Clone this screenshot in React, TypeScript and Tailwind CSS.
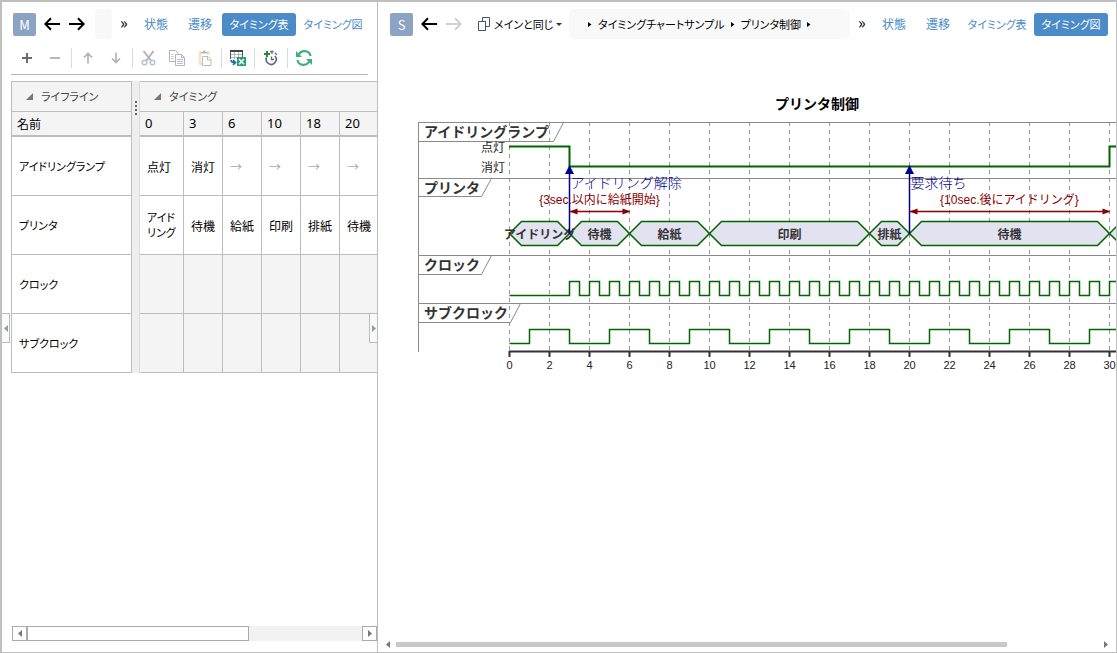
import React from 'react';
import clsx from 'clsx';

const TABS = ['状態', '遷移', 'タイミング表', 'タイミング図'];

const TIMES = [0, 3, 6, 10, 18, 20];

const LIFELINES = [
    { name: 'アイドリングランプ', cells: ['点灯', '消灯', '→', '→', '→', '→'] },
    { name: 'プリンタ', cells: ['アイドリング', '待機', '給紙', '印刷', '排紙', '待機'] },
    { name: 'クロック', cells: ['', '', '', '', '', ''] },
    { name: 'サブクロック', cells: ['', '', '', '', '', ''] },
];

/* ---------- Icons ---------- */

const ArrowIcon: React.FC<{ flip?: boolean }> = ({ flip }) => (
    <svg width="16" height="14" viewBox="0 0 16 14" className={flip ? 'rotate-180' : ''} fill="none" stroke="currentColor" strokeWidth="2">
        <path d="M16 7H1.5M7 1.2L1.3 7L7 12.8" />
    </svg>
);

const TriangleIcon: React.FC<{ dir: 'left' | 'right' }> = ({ dir }) => (
    <svg width="4" height="7" viewBox="0 0 4 7" className="shrink-0" fill="currentColor">
        <path d={dir === 'left' ? 'M4 0V7L0 3.5Z' : 'M0 0V7L4 3.5Z'} />
    </svg>
);

const CrumbIcon = () => (
    <svg width="4" height="5" viewBox="0 0 4 5" className="shrink-0" fill="currentColor">
        <path d="M0 0L3.5 2.5L0 5Z" />
    </svg>
);

const PlusIcon = () => (
    <svg width="12" height="12" viewBox="0 0 12 12" stroke="#6b6b6b" strokeWidth="2">
        <path d="M6 1V11M1 6H11" />
    </svg>
);

const MinusIcon = () => (
    <svg width="12" height="12" viewBox="0 0 12 12" stroke="#b8b8b8" strokeWidth="2">
        <path d="M1 6H11" />
    </svg>
);

const UpIcon = () => (
    <svg width="10" height="12" viewBox="0 0 10 12" fill="none" stroke="#b0b0b0" strokeWidth="1.6">
        <path d="M5 11.5V1.5M1 5.5L5 1.5L9 5.5" />
    </svg>
);

const DownIcon = () => (
    <svg width="10" height="12" viewBox="0 0 10 12" fill="none" stroke="#b0b0b0" strokeWidth="1.6">
        <path d="M5 .5V10.5M1 6.5L5 10.5L9 6.5" />
    </svg>
);

const CutIcon = () => (
    <svg width="16" height="16" viewBox="0 0 16 16" fill="none">
        <path d="M2.5 1L10 10.5M12.5 1L5.5 10.5" stroke="#b4b4b4" strokeWidth="2" />
        <circle cx="3.5" cy="12.5" r="2.3" stroke="#b3c3de" strokeWidth="1.5" />
        <circle cx="11.5" cy="12.5" r="2.3" stroke="#b3c3de" strokeWidth="1.5" />
    </svg>
);

const CopyIcon = () => (
    <svg width="16" height="16" viewBox="0 0 16 16" fill="#fff" stroke="#b4b4b4">
        <path d="M.5 .5H6.5L9.5 3.5V11.5H.5Z" />
        <path d="M2 4.5H5M2 6.5H5M2 8.5H5" stroke="#c3d0e6" />
        <path d="M6.5 4.5H12.5L15.5 7.5V15.5H6.5ZM12.5 4.5V7.5H15.5" />
        <path d="M8 9.5H14M8 11.5H14M8 13.5H14" stroke="#b3c3de" />
    </svg>
);

const PasteIcon = () => (
    <svg width="14" height="16" viewBox="0 0 14 16" fill="none">
        <path d="M2 14.5V2.5H3.5M9 2.5H10.5V5M1 13.5H4" stroke="#f5e0bf" strokeWidth="2.4" />
        <path d="M3 3.5V2H5V.5H7.5V2H9.5V3.5Z" fill="#b8b8b8" />
        <path d="M4.5 6.5H10L13 9.5V15.5H4.5ZM9.5 6.5V10H13" fill="#fff" stroke="#bcbcbc" />
    </svg>
);

const ExportIcon = () => (
    <svg width="16" height="16" viewBox="0 0 16 16" fill="none">
        <path d="M1 4.5H12M1 7.5H7M4.5 2V9M8.5 2V7" stroke="#b5b5b5" />
        <path d="M.5 9V1.5M12.5 1.5V7" stroke="#555" />
        <path d="M0 1H13" stroke="#444" strokeWidth="2" />
        <path d="M1 10Q1 12.5 5 12.5M3 10L5.5 12.5L3 15" stroke="#1f66b8" strokeWidth="1.7" />
        <rect x="7" y="7" width="9" height="9" fill="#21a366" />
        <path d="M9 9L14 14.2M14 9L9 14.2" stroke="#fff" strokeWidth="1.6" />
    </svg>
);

const AddTimeIcon = () => (
    <svg width="14" height="16" viewBox="0 0 14 16" fill="none">
        <path d="M10.9 6A5 5 0 1 1 2.6 7.4" stroke="#5c6b80" strokeWidth="1.7" />
        <path d="M6 1.5H9.5M8 1.5V4M11 3L12.8 4.8M7.5 6.5V9.5H10" stroke="#5c6b80" strokeWidth="1.3" />
        <path d="M3 1V7M0 4H6" stroke="#2b8a2b" strokeWidth="2" />
    </svg>
);

const RefreshIcon = () => (
    <svg width="16" height="16" viewBox="0 0 16 16" fill="none" stroke="#3fae82" strokeWidth="2.2">
        <path d="M2.5 5.5A6.3 6.3 0 0 1 14.6 6M13.5 10.5A6.3 6.3 0 0 1 1.4 10" />
        <path d="M0 1V7H6Z" fill="#3fae82" stroke="none" />
        <path d="M16 15V9H10Z" fill="#3fae82" stroke="none" />
    </svg>
);

const WindowsIcon = () => (
    <svg width="13" height="14" viewBox="0 0 13 14" className="shrink-0" fill="none" stroke="#44546a">
        <path d="M4.5 4V.5H11.5V9.5H8" />
        <path d="M.5 4.5H7.5V13.5H.5Z" />
    </svg>
);

/* ---------- Shared header parts ---------- */

const Badge: React.FC<{ label: string }> = ({ label }) => (
    <button className="size-[23px] shrink-0 rounded-xs bg-[#8da3c4] text-[13px] leading-none text-white">{label}</button>
);

const TabBar: React.FC<{ active: string }> = ({ active }) => (
    <nav className="flex shrink-0">
        {TABS.map((tab) => (
            <button
                key={tab}
                className={clsx(
                    'h-[23px] rounded-[3px] text-center whitespace-nowrap',
                    tab.length > 2 ? 'w-[74px] text-[11px]' : 'w-11',
                    tab === active ? 'bg-[#4a8bc8] text-white' : 'text-[#4a8bc8]'
                )}
            >
                {tab}
            </button>
        ))}
    </nav>
);

/* ---------- Main pane: timing table ---------- */

const ToolButton: React.FC<{ label: string; children: React.ReactNode }> = ({ label, children }) => (
    <button aria-label={label} className="flex h-6 w-7 items-center justify-center">
        {children}
    </button>
);

const Separator = () => <span className="mx-[2px] h-5 w-px bg-[#d9d9d9]" />;

const GroupHeader: React.FC<{ title: string }> = ({ title }) => (
    <span className="flex items-center gap-2 pl-[14px] text-[11px] text-[#444]">
        <svg width="7" height="7" viewBox="0 0 7 7" fill="#777">
            <path d="M7 0V7H0Z" />
        </svg>
        {title}
    </span>
);

const TimingTable = () => (
    <div className="mt-[6px] ml-[9px] flex overflow-hidden">
        <table className="w-[121px] shrink-0 table-fixed border-separate border-spacing-0 border-t border-l border-[#bdbdbd] text-left">
            <thead className="bg-[#f4f4f4]">
                <tr>
                    <th className="h-[30px] border-r border-b border-[#bdbdbd] p-0 font-normal">
                        <GroupHeader title="ライフライン" />
                    </th>
                </tr>
                <tr>
                    <th className="h-[25px] border-r border-b-2 border-[#bdbdbd] p-0 pl-[5px] font-normal">名前</th>
                </tr>
            </thead>
            <tbody>
                {LIFELINES.map((line) => (
                    <tr key={line.name}>
                        <td className="h-[59px] border-r border-b border-[#bdbdbd] p-0 pl-[7px] text-[11px] whitespace-nowrap">{line.name}</td>
                    </tr>
                ))}
            </tbody>
        </table>

        {/* Column splitter */}
        <div className="flex w-2 shrink-0 flex-col items-center gap-[2px] border-r border-[#dcdcdc] bg-[#eee] pt-5">
            {[0, 1, 2, 3].map((i) => (
                <span key={i} className="size-[2px] bg-[#666]" />
            ))}
        </div>

        <table className="w-[239px] shrink-0 table-fixed border-separate border-spacing-0 border-t border-[#bdbdbd] text-left">
            <colgroup>
                <col className="w-11" />
                {TIMES.slice(1).map((t) => (
                    <col key={t} className="w-[39px]" />
                ))}
            </colgroup>
            <thead className="bg-[#f4f4f4]">
                <tr>
                    <th colSpan={6} className="h-[30px] border-b border-[#bdbdbd] p-0 font-normal">
                        <GroupHeader title="タイミング" />
                    </th>
                </tr>
                <tr>
                    {TIMES.map((t) => (
                        <th key={t} className="h-[25px] border-r border-b-2 border-[#bdbdbd] p-0 pl-[5px] font-['Noto_Sans'] text-[13px] font-normal">
                            {t}
                        </th>
                    ))}
                </tr>
            </thead>
            <tbody>
                {LIFELINES.map((line) => (
                    <tr key={line.name}>
                        {line.cells.map((cell, i) => (
                            <td
                                key={i}
                                className={clsx(
                                    'h-[59px] border-r border-b border-[#bdbdbd] p-0 pl-[7px] leading-[15px]',
                                    cell === '' && 'bg-[#f4f4f4]',
                                    cell === '→' && 'text-[#a8a8a8]',
                                    cell.length > 2 && 'text-[11px]'
                                )}
                            >
                                {cell}
                            </td>
                        ))}
                    </tr>
                ))}
            </tbody>
        </table>
    </div>
);

const MainPane = () => (
    <section className="relative flex w-[376px] shrink-0 flex-col overflow-hidden border-r border-[#bdbdbd]">
        <header className="flex h-11 items-center pl-[11px]">
            <Badge label="M" />
            <button aria-label="戻る" className="ml-2"><ArrowIcon /></button>
            <button aria-label="進む" className="ml-[9px]"><ArrowIcon flip /></button>
            <span className="ml-[10px] h-[30px] w-[17px] rounded-sm bg-[#f8f8f8]" />
            <span className="w-[22px] pb-1 pl-2 text-base leading-none">»</span>
            <TabBar active="タイミング表" />
        </header>

        <div className="mx-[9px] flex items-center border-b border-[#b5b5b5] pb-1 pl-[2px]">
            <ToolButton label="追加"><PlusIcon /></ToolButton>
            <ToolButton label="削除"><MinusIcon /></ToolButton>
            <Separator />
            <ToolButton label="上へ"><UpIcon /></ToolButton>
            <ToolButton label="下へ"><DownIcon /></ToolButton>
            <Separator />
            <ToolButton label="切り取り"><CutIcon /></ToolButton>
            <ToolButton label="コピー"><CopyIcon /></ToolButton>
            <ToolButton label="貼り付け"><PasteIcon /></ToolButton>
            <Separator />
            <ToolButton label="エクスポート"><ExportIcon /></ToolButton>
            <Separator />
            <ToolButton label="時刻を追加"><AddTimeIcon /></ToolButton>
            <Separator />
            <ToolButton label="更新"><RefreshIcon /></ToolButton>
        </div>

        <TimingTable />

        {/* Horizontal scrollbar */}
        <div className="mt-auto mb-[11px] ml-[10px] flex h-[15px] bg-[#f2f2f2] text-[#777]">
            <button aria-label="左へ" className="flex w-[15px] items-center justify-center border border-[#ababab] bg-white">
                <TriangleIcon dir="left" />
            </button>
            <div className="w-[222px] border border-[#ababab] bg-white" />
            <button aria-label="右へ" className="ml-auto flex w-[15px] items-center justify-center border border-[#ababab] bg-white">
                <TriangleIcon dir="right" />
            </button>
        </div>

        {/* Side panel handles */}
        <button aria-label="左パネル" className="absolute top-[311px] left-0 flex h-[30px] w-2 items-center justify-center border border-l-0 border-[#bdbdbd] bg-[#f8f9fb] text-[#999]">
            <TriangleIcon dir="left" />
        </button>
        <button aria-label="右パネル" className="absolute top-[311px] right-0 flex h-[30px] w-2 items-center justify-center border border-r-0 border-[#bdbdbd] bg-[#f8f9fb] text-[#999]">
            <TriangleIcon dir="right" />
        </button>
    </section>
);

/* ---------- Sub pane: timing chart ---------- */

const tx = (t: number) => 509.5 + t * 20;

const LANES = [
    { name: 'アイドリングランプ', top: 122.5, bottom: 141.5, width: 135 },
    { name: 'プリンタ', top: 178.5, bottom: 196.5, width: 63 },
    { name: 'クロック', top: 255.5, bottom: 274.5, width: 63 },
    { name: 'サブクロック', top: 303.5, bottom: 322.5, width: 92 },
];

const STATES = [
    { from: 0, to: 3, label: 'アイドリング' },
    { from: 3, to: 6, label: '待機' },
    { from: 6, to: 10, label: '給紙' },
    { from: 10, to: 18, label: '印刷' },
    { from: 18, to: 20, label: '排紙' },
    { from: 20, to: 30, label: '待機' },
    { from: 30, to: 40, label: '' },
];

const MESSAGES = [
    { at: 3, label: 'アイドリング解除' },
    { at: 20, label: '要求待ち' },
];

const CONSTRAINTS = [
    { from: 3, to: 6, label: '{3sec.以内に給紙開始}' },
    { from: 20, to: 30, label: '{10sec.後にアイドリング}' },
];

const TICKS = Array.from({ length: 16 }, (_, i) => i * 2);

// Square wave starting low at t=0, first rising edge at `start`
const wave = (start: number, half: number, low: number, high: number) => {
    let d = `M${tx(0)} ${low}`;
    let up = false;
    for (let t = start; t <= 32; t += half) {
        d += `H${tx(t)}V${up ? low : high}`;
        up = !up;
    }
    return d;
};

const TimingChart = () => (
    <svg
        width="738"
        height="340"
        viewBox="378 46 738 340"
        className="block shrink-0 font-['Liberation_Sans','Noto_Sans_CJK_JP',sans-serif] [font-feature-settings:normal]"
        fill="none"
    >
        <text x="817" y="109" textAnchor="middle" className="fill-black text-[14px] font-bold">プリンタ制御</text>

        {TICKS.map((t) => (
            <path key={t} d={`M${tx(t)} 122V351`} stroke="#999" strokeDasharray="4 4" />
        ))}

        {LANES.map((lane) => (
            <g key={lane.name}>
                <path
                    d={`M418 ${lane.top}H1117M418 ${lane.bottom}H${418.5 + lane.width}l10 ${lane.top - lane.bottom}`}
                    stroke="#8a8a8a"
                />
                <text x="424" y={lane.top + 14} className="fill-[#333] text-[14px] font-bold">{lane.name}</text>
            </g>
        ))}
        <path d="M418.5 122V352" stroke="#8a8a8a" />

        <g className="fill-[#222] text-[12px]">
            <text x="505" y="152" textAnchor="end">点灯</text>
            <text x="505" y="172" textAnchor="end">消灯</text>
        </g>
        <path d="M509 146.5H569.5V166.5H1109.5V146.5H1117" stroke="#006400" strokeWidth="2" />

        {STATES.map((s) => (
            <path
                key={s.from}
                d={`M${tx(s.from)} 233.5L${tx(s.from) + 12} 221.5H${tx(s.to) - 12}L${tx(s.to)} 233.5L${tx(s.to) - 12} 245.5H${tx(s.from) + 12}Z`}
                fill="#e2e2f0"
                stroke="#006400"
                strokeWidth="1.5"
            />
        ))}
        {STATES.map((s) => (
            <text key={s.from} x={(tx(s.from) + tx(s.to)) / 2} y="239" textAnchor="middle" className="fill-[#333] text-[12px] font-bold">
                {s.label}
            </text>
        ))}

        <path d={wave(3, 0.5, 295.5, 281.5)} stroke="#006400" strokeWidth="1.5" />
        <path d={wave(1, 2, 343.5, 329.5)} stroke="#006400" strokeWidth="1.5" />

        {MESSAGES.map((m) => (
            <g key={m.at}>
                <path d={`M${tx(m.at)} 234V170`} stroke="#00008b" strokeWidth="1.5" />
                <path d={`M${tx(m.at)} 165l4.5 9h-9Z`} fill="#00008b" />
                <text x={tx(m.at) + 1} y="188" className="fill-[#00008b] text-[14px] font-light">{m.label}</text>
            </g>
        ))}

        {CONSTRAINTS.map((c) => (
            <g key={c.from}>
                <path d={`M${tx(c.from)} 211.5H${tx(c.to)}`} stroke="#8b0000" strokeWidth="1.5" />
                <path d={`M${tx(c.from)} 211.5l8-3v6ZM${tx(c.to) + 1} 211.5l-8-3v6Z`} fill="#8b0000" />
                <text x={(tx(c.from) + tx(c.to)) / 2} y="204" textAnchor="middle" className="fill-[#8b0000] text-[12px]">
                    {c.label}
                </text>
            </g>
        ))}

        <path d="M509 351.5H1117" stroke="#333" strokeWidth="2" />
        {TICKS.map((t) => (
            <g key={t}>
                <path d={`M${tx(t)} 351V357`} stroke="#333" strokeWidth="2" />
                <text x={tx(t)} y="369" textAnchor="middle" className="fill-[#222] text-[11px]">{t}</text>
            </g>
        ))}
    </svg>
);

const SubPane = () => (
    <section className="flex min-w-0 flex-1 flex-col overflow-hidden">
        <header className="flex h-11 shrink-0 items-center pr-2 pl-3">
            <Badge label="S" />
            <button aria-label="戻る" className="ml-2"><ArrowIcon /></button>
            <button aria-label="進む" className="ml-[9px] text-[#d0d0d0]"><ArrowIcon flip /></button>
            <button className="ml-4 flex w-[83px] shrink-0 items-center gap-[3px] text-[11px] whitespace-nowrap">
                <WindowsIcon />
                メインと同じ
                <svg width="6" height="3" viewBox="0 0 6 3" className="shrink-0" fill="#333">
                    <path d="M0 0H6L3 3Z" />
                </svg>
            </button>
            <div className="ml-2 flex h-[30px] min-w-0 flex-1 items-center gap-[6px] rounded-md bg-[#f9f9f9] pl-[19px] text-[11px] whitespace-nowrap">
                <CrumbIcon />
                <span>タイミングチャートサンプル</span>
                <CrumbIcon />
                <span>プリンタ制御</span>
                <CrumbIcon />
            </div>
            <span className="w-[22px] pb-1 pl-2 text-base leading-none">»</span>
            <TabBar active="タイミング図" />
        </header>

        <TimingChart />

        <div className="mt-auto mb-1 flex h-[7px] items-center gap-[6px] px-2 text-[#777]">
            <TriangleIcon dir="left" />
            <div className="min-w-0 flex-1">
                <div className="h-[5px] w-[87%] bg-[#c9c9c9]" />
            </div>
            <TriangleIcon dir="right" />
        </div>
    </section>
);

export default function App() {
    return (
        <main className="flex h-screen border-t-2 border-r border-b border-l-2 border-[#bfbfbf] bg-white font-['Noto_Sans_CJK_JP',sans-serif] text-xs text-black [font-feature-settings:'palt']">
            <MainPane />
            <SubPane />
        </main>
    );
}
